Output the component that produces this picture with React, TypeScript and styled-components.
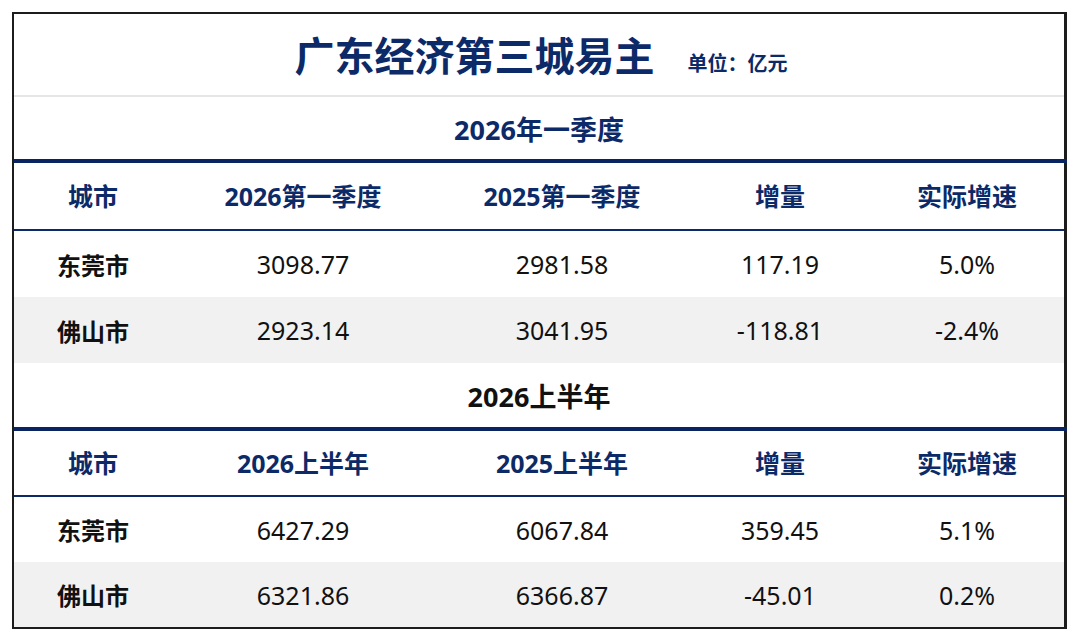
import React from "react";
import styled, { createGlobalStyle } from "styled-components";

const Global = createGlobalStyle`
  html, body { margin: 0; padding: 0; background: #ffffff; }
  body { font-family: "Noto Sans", "Noto Sans CJK SC", sans-serif; }
`;

const NAVY = "#0c2a68";
const CJK = `"Noto Sans", "Noto Sans CJK SC", sans-serif`;

const Page = styled.div`
  padding: 12px 0 0 12px;
`;

const Frame = styled.div`
  width: 1050px;
  border-top: 2px solid #1c1c1c;
  border-left: 2px solid #1c1c1c;
  border-right: 3px solid #1c1c1c;
  border-bottom: 2px solid #1c1c1c;
  background: #fff;
`;

const TitleRow = styled.div`
  height: 83px;
  border-bottom: 2px solid #e6e6e6;
  display: flex;
  justify-content: center;
  align-items: baseline;
  gap: 33px;
  box-sizing: border-box;
  line-height: 83px;
  padding-left: 4px;
`;

const Title = styled.h1`
  margin: 0;
  font-family: ${CJK};
  font-size: 40px;
  font-weight: 700;
  color: ${NAVY};
`;

const Unit = styled.span`
  font-family: ${CJK};
  font-size: 20px;
  font-weight: 700;
  color: ${NAVY};
`;

const SectionRow = styled.div<{ $h: number; $dark?: boolean }>`
  height: ${(p) => p.$h}px;
  display: flex;
  align-items: center;
  justify-content: center;
  border-bottom: 4px solid #0a2462;
  margin-right: -3px;
  padding-right: 3px;
  font-family: ${CJK};
  font-size: 27px;
  font-weight: 700;
  color: ${(p) => (p.$dark ? "#111111" : NAVY)};
`;

const Row = styled.div<{ $h: number; $grey?: boolean; $head?: boolean }>`
  display: grid;
  grid-template-columns: 158px 262px 256px 180px 1fr;
  height: ${(p) => p.$h}px;
  background: ${(p) => (p.$grey ? "#f1f1f1" : "#ffffff")};
  border-bottom: ${(p) => (p.$head ? `2px solid ${NAVY}` : "none")};
`;

const Cell = styled.div<{ $kind: "head" | "city" | "num" }>`
  display: flex;
  align-items: center;
  justify-content: center;
  font-family: ${CJK};
  font-size: ${(p) => (p.$kind === "num" ? "25px" : p.$kind === "head" ? "25px" : "24px")};
  font-weight: ${(p) => (p.$kind === "num" ? 400 : 700)};
  color: ${(p) => (p.$kind === "head" ? NAVY : "#111111")};
  padding-bottom: ${(p) => (p.$kind === "head" ? "2px" : "0")};
`;

type Section = {
  label: string;
  dark?: boolean;
  sectionH: number;
  headers: string[];
  rows: string[][];
  rowH: number[];
  headH: number;
};

const sections: Section[] = [
  {
    label: "2026年一季度",
    sectionH: 62,
    headH: 66,
    headers: ["城市", "2026第一季度", "2025第一季度", "增量", "实际增速"],
    rows: [
      ["东莞市", "3098.77", "2981.58", "117.19", "5.0%"],
      ["佛山市", "2923.14", "3041.95", "-118.81", "-2.4%"],
    ],
    rowH: [66, 66],
  },
  {
    label: "2026上半年",
    dark: true,
    sectionH: 64,
    headH: 64,
    headers: ["城市", "2026上半年", "2025上半年", "增量", "实际增速"],
    rows: [
      ["东莞市", "6427.29", "6067.84", "359.45", "5.1%"],
      ["佛山市", "6321.86", "6366.87", "-45.01", "0.2%"],
    ],
    rowH: [65, 65],
  },
];

export default function App() {
  return (
    <>
      <Global />
      <Page>
        <Frame>
          <TitleRow>
            <Title>广东经济第三城易主</Title>
            <Unit>单位：亿元</Unit>
          </TitleRow>
          {sections.map((s) => (
            <React.Fragment key={s.label}>
              <SectionRow $h={s.sectionH} $dark={s.dark}>
                {s.label}
              </SectionRow>
              <Row $h={s.headH} $head>
                {s.headers.map((h) => (
                  <Cell key={h} $kind="head">
                    {h}
                  </Cell>
                ))}
              </Row>
              {s.rows.map((r, i) => (
                <Row key={r[0]} $h={s.rowH[i]} $grey={i === 1}>
                  {r.map((v, j) => (
                    <Cell key={j} $kind={j === 0 ? "city" : "num"}>
                      {v}
                    </Cell>
                  ))}
                </Row>
              ))}
            </React.Fragment>
          ))}
        </Frame>
      </Page>
    </>
  );
}
